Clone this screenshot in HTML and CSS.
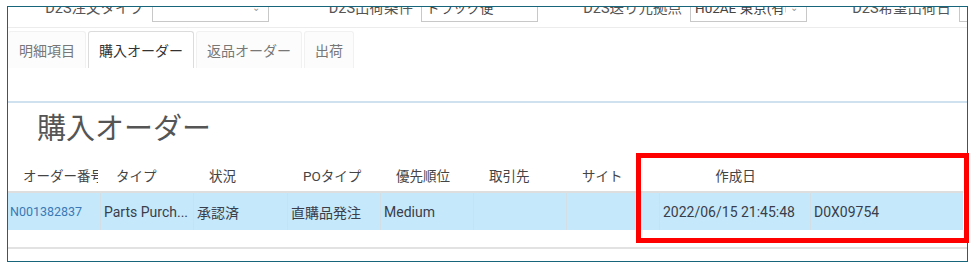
FILE: index.html
```html
<!DOCTYPE html>
<html lang="ja">
<head>
    <meta charset="UTF-8">
    <title>購入オーダー</title>
    <link rel="stylesheet" href="styles.css">
</head>
<body>
    <div class="frame">
        <!-- header filters, scrolled partly out of view -->
        <div class="filters">
            <div class="field">
                <span class="field-label">D2S注文タイプ</span>
                <span class="select"><span class="select-text"></span><span class="caret">⌄</span></span>
            </div>
            <div class="field">
                <span class="field-label">D2S出荷条件</span>
                <span class="select"><span class="select-text">トラック便</span></span>
            </div>
            <div class="field">
                <span class="field-label">D2S送り元拠点</span>
                <span class="select"><span class="select-text">H02AE 東京(有明)</span><span class="caret">⌄</span></span>
            </div>
            <div class="field">
                <span class="field-label">D2S希望出荷日</span>
                <span class="select"></span>
            </div>
        </div>

        <div class="tabs">
            <div class="tab">明細項目</div>
            <div class="tab active">購入オーダー</div>
            <div class="tab">返品オーダー</div>
            <div class="tab">出荷</div>
        </div>
        <div class="tab-panel"></div>

        <h1 class="section-title">購入オーダー</h1>

        <div class="grid">
            <div class="grid-row grid-head">
                <div class="cell">オーダー番号</div>
                <div class="cell">タイプ</div>
                <div class="cell">状況</div>
                <div class="cell">POタイプ</div>
                <div class="cell">優先順位</div>
                <div class="cell">取引先</div>
                <div class="cell">サイト</div>
                <div class="cell cell-wide cell-center">作成日</div>
                <div class="cell cell-wide"></div>
            </div>
            <div class="grid-row grid-body">
                <div class="cell link">N001382837</div>
                <div class="cell">Parts Purch...</div>
                <div class="cell">承認済</div>
                <div class="cell">直購品発注</div>
                <div class="cell">Medium</div>
                <div class="cell"></div>
                <div class="cell"></div>
                <div class="cell cell-wide">2022/06/15 21:45:48</div>
                <div class="cell cell-wide">D0X09754</div>
            </div>
        </div>
        <div class="grid-footer"></div>
    </div>

    <!-- annotation box drawn over the screenshot -->
    <div class="highlight"></div>
</body>
</html>
```

FILE: styles.css
```css
/* Reset */
html, body {
    margin: 0;
    padding: 0;
}

body {
    background-color: #fff;
    font-family: Roboto, "Noto Sans CJK JP", sans-serif;
    color: #333;
    position: relative;
}

/* Outer window frame */
.frame {
    margin: 6px 0 0 7px;
    width: 959px;
    height: 254px;
    border: 1px solid #17657a;
    overflow: hidden;
}

/* Filter row (top half is scrolled away) */
.filters {
    display: flex;
    align-items: flex-end;
    height: 14px;
    padding-bottom: 6px;
    border-bottom: 1px solid #ececec;
}

.field {
    display: flex;
    align-items: flex-end;
    width: 269px;
    flex: none;
}

.field:first-child {
    width: 261px;
}

.field-label {
    flex: 1;
    text-align: right;
    font-size: 14.5px;
    line-height: 20px;
    color: #555;
    margin: 0 8px 2px 0;
    white-space: nowrap;
}

.select {
    display: flex;
    align-items: center;
    width: 117px;
    height: 30px;
    padding-left: 4px;
    border: 1px solid #c8c8c8;
    font-size: 13.5px;
    color: #444;
    box-sizing: border-box;
    margin-bottom: -1px;
    white-space: nowrap;
}

.select-text {
    flex: 1;
    min-width: 0;
    overflow: hidden;
}

.caret {
    flex: none;
    margin: 0 8px 0 4px;
    font-size: 10px;
    color: #999;
}

/* Tabs */
.tabs {
    display: flex;
    gap: 2px;
    margin-top: 3px;
}

.tab {
    height: 36px;
    padding: 0 10px;
    display: flex;
    align-items: center;
    font-size: 14px;
    color: #777;
    background-color: #fcfcfc;
    border: 1px solid #f1f1f1;
    border-bottom: none;
    border-radius: 3px 3px 0 0;
}

.tab:first-child {
    border-left-color: transparent;
}

.tab.active {
    color: #333;
    background-color: #fff;
    border-color: #dcdcdc;
}

.tab-panel {
    height: 33px;
    border-bottom: 2px solid #cfe0ee;
}

/* Section heading */
.section-title {
    margin: 12px 0 14px 29px;
    font-size: 29px;
    line-height: 29px;
    font-weight: normal;
    color: #555;
}

/* Grid */
.grid {
    width: 955px;
}

.grid-row {
    display: flex;
}

.cell {
    width: 93px;
    flex: none;
    box-sizing: border-box;
    white-space: nowrap;
    overflow: hidden;
}

.cell:nth-child(3) {
    width: 94px;
}

.cell-wide {
    width: 151px;
}

.grid-head {
    height: 33px;
    align-items: center;
    border-bottom: 2px solid #dedede;
    font-size: 13.5px;
    color: #444;
}

.grid-head .cell {
    padding-left: 15px;
    clip-path: inset(0 3px 0 0);
}

.grid-head .cell-center {
    padding-left: 0;
    text-align: center;
}

.grid-body {
    height: 37px;
    background-color: #c5e9fb;
    font-size: 14px;
    color: #3a3d4a;
}

.grid-body .cell {
    display: flex;
    align-items: center;
    padding-left: 3px;
    border-right: 1px solid #d4dfe5;
}

.grid-body .cell:last-child {
    border-right: none;
}

.grid-body .link {
    padding-left: 2px;
    font-size: 12.5px;
    color: #3b78b5;
}

.grid-footer {
    height: 17px;
    border-bottom: 2px solid #e2e2e2;
}

/* Red annotation rectangle */
.highlight {
    position: absolute;
    left: 636px;
    top: 153px;
    width: 333px;
    height: 90px;
    border: 5px solid #ff0000;
    box-sizing: border-box;
}
```
